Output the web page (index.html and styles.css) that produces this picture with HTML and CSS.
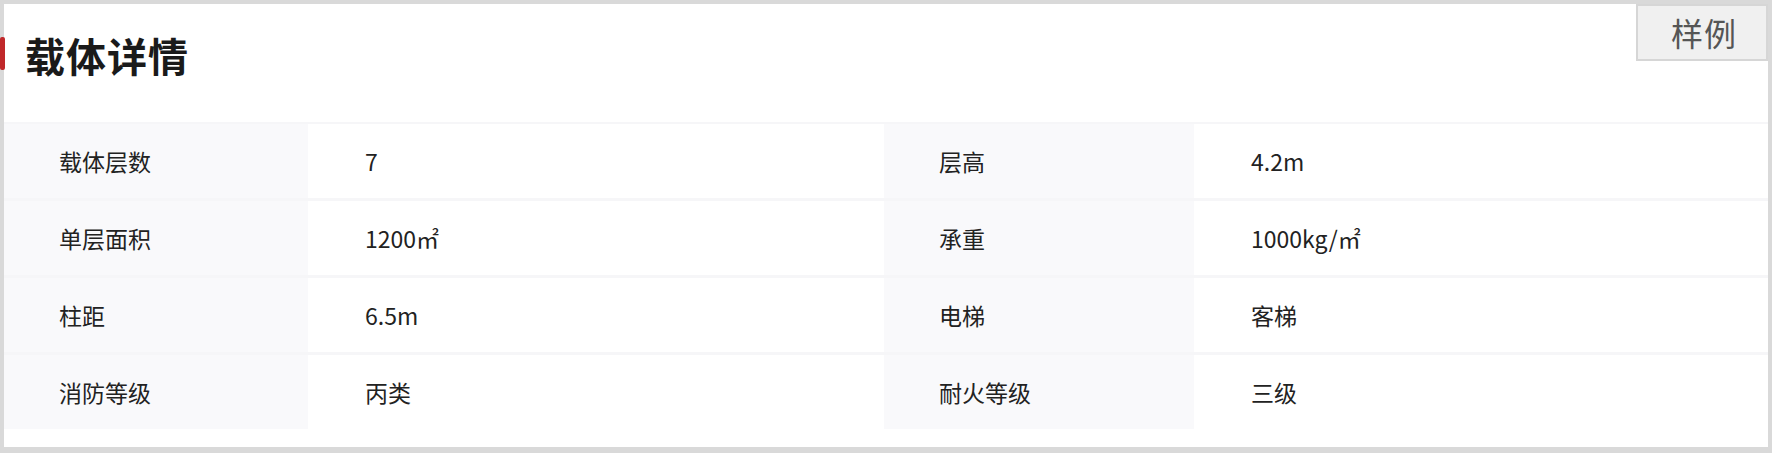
FILE: index.html
```html
<!DOCTYPE html>
<html lang="zh">
<head>
<meta charset="utf-8">
<title>载体详情</title>
<link rel="stylesheet" href="styles.css">
</head>
<body>
<div class="panel">
  <div class="header">
    <h1 class="title">载体详情</h1>
    <button class="legend">样例</button>
  </div>
  <div class="grid">
    <div class="label">载体层数</div><div class="value">7</div>
    <div class="label">层高</div><div class="value">4.2m</div>
    <div class="label">单层面积</div><div class="value">1200㎡</div>
    <div class="label">承重</div><div class="value">1000kg/㎡</div>
    <div class="label">柱距</div><div class="value">6.5m</div>
    <div class="label">电梯</div><div class="value">客梯</div>
    <div class="label">消防等级</div><div class="value">丙类</div>
    <div class="label">耐火等级</div><div class="value">三级</div>
  </div>
</div>
</body>
</html>
```
FILE: styles.css
```css
html, body {
  margin: 0;
  padding: 0;
}
body {
  background: #d9d9d9;
  font-family: "Noto Sans CJK SC", "Noto Sans", sans-serif;
  width: 1772px;
  height: 453px;
  box-sizing: border-box;
  padding: 4px 4px 6px 4px;
}
.panel {
  position: relative;
  background: #ffffff;
  height: 443px;
}
.header {
  height: 118px;
  box-sizing: border-box;
  padding: 31px 0 0 21px;
}
.header::before {
  content: "";
  position: absolute;
  left: -4px;
  top: 33px;
  width: 5px;
  height: 33px;
  border-radius: 2px;
  background: #c0282a;
}
.title {
  margin: 0;
  font-size: 40px;
  line-height: 40px;
  font-weight: 700;
  color: #1a1a1a;
  letter-spacing: 1px;
}
.legend {
  position: absolute;
  top: 0;
  right: 0;
  width: 132px;
  height: 57px;
  box-sizing: border-box;
  border: 2px solid #d6d6d6;
  background: #f0f0f0;
  color: #555555;
  font-family: "Noto Sans CJK SC", sans-serif;
  font-size: 32px;
  line-height: 1;
  padding: 0 0 2px 4px;
  letter-spacing: 1px;
}
.grid {
  display: grid;
  grid-template-columns: 304px 576px 310px 1fr;
  grid-auto-rows: 74px;
  row-gap: 3px;
  padding-top: 2px;
  background: #f6f6f8;
}
.label, .value {
  display: flex;
  align-items: center;
  font-size: 23px;
  color: #222222;
}
.label {
  background: #f9f9fb;
  padding-left: 55px;
}
.value {
  background: #ffffff;
  padding-left: 57px;
}
```
